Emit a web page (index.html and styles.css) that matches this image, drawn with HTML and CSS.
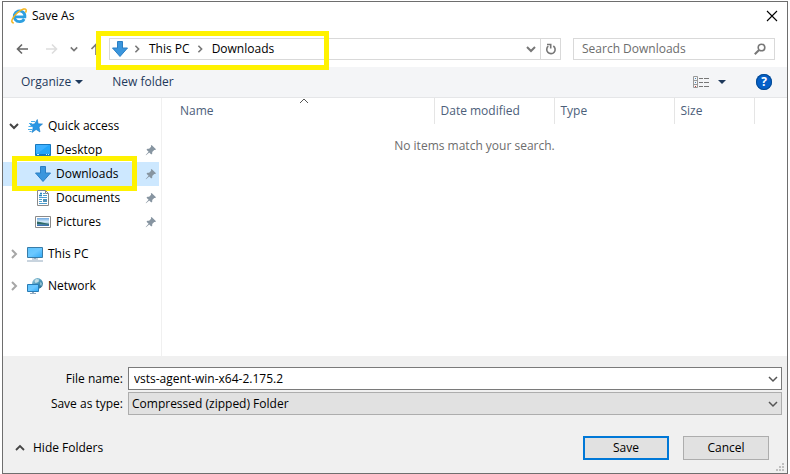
FILE: index.html
```
<!DOCTYPE html>
<html lang="en">
<head>
<meta charset="utf-8">
<title>Save As</title>
<meta name="viewport" content="width=device-width, initial-scale=1">
<link rel="stylesheet" href="styles.css">
</head>
<body>
<svg class="defs" aria-hidden="true">
  <defs>
    <linearGradient id="screen" x1="0" y1="0" x2="1" y2="1"><stop offset="0" stop-color="#5cc4ff"/><stop offset="0.5" stop-color="#6cc8ff"/><stop offset="1" stop-color="#2ea9f7"/></linearGradient>
    <linearGradient id="globe" x1="0" y1="0" x2="1" y2="1"><stop offset="0" stop-color="#9cc8da"/><stop offset="0.5" stop-color="#4f9abb"/><stop offset="1" stop-color="#1d5f80"/></linearGradient>
    <linearGradient id="photo" x1="0" y1="0" x2="0" y2="1"><stop offset="0" stop-color="#6fa9e2"/><stop offset="0.5" stop-color="#dceefa"/><stop offset="0.7" stop-color="#7fa9c4"/><stop offset="1" stop-color="#2b62ad"/></linearGradient>
    <symbol id="arrow" viewBox="0 0 16 16"><path d="M5.500.5h5V7h5L8 15.500.5 7h5z" fill="#3a96dd" stroke="#2b7fc4"/></symbol>
    <symbol id="pin" viewBox="0 0 12 12"><path d="M6.600 1 11 5.300 10.200 6.100 9.200 5.900 7.200 7.900 7.300 9.600 6.300 10.500 4.200 8.400 1 11.300.7 11 3.600 7.800 1.500 5.700 2.400 4.700 4.100 4.800 6.100 2.800 5.800 1.800z" fill="#8795a1"/></symbol>
    <symbol id="down" viewBox="0 0 10 10"><path d="M1 3l4 4 4-4" fill="none" stroke="currentColor"/></symbol>
    <symbol id="right" viewBox="0 0 10 10"><path d="M3 1l4 4-4 4" fill="none" stroke="currentColor"/></symbol>
  </defs>
</svg>
<main class="dialog">
  <header class="titlebar">
    <svg class="ie" viewBox="0 0 16 16" aria-hidden="true"><path d="M13.200 11A5.400 5.400 0 1 1 13.900 8.800H4.500" fill="none" stroke="#2d9fe0" stroke-width="2.800"/><path d="M4.500 6.500A4.400 4.400 0 0 1 8.500 3.700" fill="none" stroke="#7cc8f2"/><path d="M2.800 15C-1.500 14.500 2 8.500 7 4.300 11 1 15.300-.5 15.200 2.500c0 .8-.3 1.500-.7 2.200" fill="none" stroke="#f5b41b" stroke-width="1.500"/></svg>
    <h1>Save As</h1>
    <button class="close" aria-label="Close"><svg viewBox="0 0 12 12"><path d="M1 1l10 10M11 1L1 11" fill="none" stroke="#000" stroke-width="1.100"/></svg></button>
  </header>

  <nav class="navbar" aria-label="Location">
    <div class="history">
      <button aria-label="Back"><svg class="i12" viewBox="0 0 12 12"><path d="M12 6H1.500M6 1.500L1.500 6 6 10.500" fill="none" stroke="#666" stroke-width="1.600"/></svg></button>
      <button aria-label="Forward" disabled><svg class="i12" viewBox="0 0 12 12"><path d="M0 6h10.500M6 1.500L10.500 6 6 10.500" fill="none" stroke="#ddd" stroke-width="1.600"/></svg></button>
      <button class="recent" aria-label="Recent locations"><svg class="i8"><use href="#down"/></svg></button>
      <button aria-label="Up"><svg class="i12" viewBox="0 0 12 12"><path d="M6 12V1.500M1.500 6L6 1.500 10.500 6" fill="none" stroke="#777" stroke-width="1.600"/></svg></button>
    </div>
    <div class="address">
      <svg class="i16 place"><use href="#arrow"/></svg>
      <svg class="i8 sep"><use href="#right"/></svg>
      <a href="#">This PC</a>
      <svg class="i8 sep"><use href="#right"/></svg>
      <a href="#">Downloads</a>
      <button class="previous" aria-label="Previous locations"><svg class="i10"><use href="#down"/></svg></button>
      <button class="refresh" aria-label="Refresh"><svg class="i12" viewBox="0 0 12 12"><path d="M8.300 3A4.200 4.200 0 1 1 3.300 3.200" fill="none" stroke="#777" stroke-width="1.600"/><path d="M2 1.500h3.700v4" fill="none" stroke="#777" stroke-width="1.600"/></svg></button>
      <span class="mark mark-address"></span>
    </div>
    <div class="search">
      <input type="search" placeholder="Search Downloads" aria-label="Search Downloads">
      <svg class="i12" viewBox="0 0 12 12" aria-hidden="true"><circle cx="7.500" cy="4.500" r="3.300" fill="none" stroke="#777" stroke-width="1.600"/><path d="M5 7L.8 11.200" stroke="#777" stroke-width="2"/></svg>
    </div>
  </nav>

  <div class="toolbar">
    <button>Organize <svg class="caret" viewBox="0 0 8 4"><path d="M0 0h8L4 4z"/></svg></button>
    <button class="new">New folder</button>
    <button class="view" aria-label="Change your view"><svg class="list" viewBox="0 0 16 12"><path d="M.5.5h4v11h-4zM.5 4.500h4M.5 8.500h4" fill="none" stroke="#999"/><path d="M6 2.500h4m1 0h5M6 6.500h4m1 0h5M6 10.500h4m1 0h5" stroke="#777"/><path d="M2 2.500h1M2 6.500h1" stroke="#4a86b8"/><path d="M2 10.500h1" stroke="#c0392b"/></svg><svg class="caret" viewBox="0 0 8 4"><path d="M0 0h8L4 4z"/></svg></button>
    <button class="help" aria-label="Help">?</button>
  </div>

  <div class="body">
    <nav class="tree" aria-label="Folders">
      <ul>
        <li><a class="root open" href="#"><svg class="twist"><use href="#down"/></svg><svg class="i16" viewBox="0 0 16 16"><path d="M10.300 1.500l.8 4.300 4.400.2-3.500 3 1 5-3.900-2.500L5 14.500l1.200-5L3 6.500l4.500-.6z" fill="#2997e5" stroke="#187bc6" stroke-width=".6"/><path d="M4 3.500h4M2 5.500h3M1.500 8.500h4M1 11.500h4M2.500 13.500h2" stroke="#4aaeea"/></svg>Quick access</a>
          <ul>
            <li><a class="leaf" href="#"><svg class="i16" viewBox="0 0 16 16"><path d="M.5 2.500h15v11H.5z" fill="#23a5fa" stroke="#1677bd"/><path d="M1 3h13L3 11H1z" fill="#3db0ff"/><path d="M1 12.500h14" stroke="#1677bd"/><path d="M2 12.500h2m7 0h1m1 0h1" stroke="#c7eaff"/></svg>Desktop<svg class="pin"><use href="#pin"/></svg></a></li>
            <li><a class="leaf selected" href="#" aria-current="true"><svg class="i16"><use href="#arrow"/></svg>Downloads<svg class="pin"><use href="#pin"/></svg><span class="mark mark-folder"></span></a></li>
            <li><a class="leaf" href="#"><svg class="i16" viewBox="0 0 16 16"><path d="M2.500.5h8l3 3v12h-11z" fill="#fff" stroke="#8a8a8a"/><path d="M10.500.5v3h3" fill="none" stroke="#8a8a8a"/><path d="M8 3.500h2M8 5.500h4M4 7.500h8M4 9.500h3M4 11.500h3M4 13.500h8" stroke="#4f9fcf"/><path d="M4 5.500h3M5 3.500h2" stroke="#2684bd" stroke-width="1.500"/><path d="M8 9h4v3H8z" fill="#4f91b7"/></svg>Documents<svg class="pin"><use href="#pin"/></svg></a></li>
            <li><a class="leaf" href="#"><svg class="i16" viewBox="0 0 16 16"><path d="M.5 2.500h15v11H.5z" fill="#fff" stroke="#8a8a8a"/><path d="M2 4h12v8H2z" fill="url(#photo)"/><path d="M2 7.500l3 .5 9 2v.8L2 10z" fill="#2e6a66"/></svg>Pictures<svg class="pin"><use href="#pin"/></svg></a></li>
          </ul>
        </li>
        <li><a class="root" href="#"><svg class="twist"><use href="#right"/></svg><svg class="i16" viewBox="0 0 16 16"><path d="M.5 1.500h15v10H.5z" fill="url(#screen)" stroke="#397ca8"/><path d="M5 13h6M0 15h16" stroke="#92a9be"/><path d="M7 12h2v1H7z" fill="#92a9be"/></svg>This PC</a></li>
        <li><a class="root" href="#"><svg class="twist"><use href="#right"/></svg><svg class="i16" viewBox="0 0 16 16"><circle cx="10.500" cy="5.500" r="5.400" fill="url(#globe)"/><path d="M9 1l3 .5-.5 2.500-3 1-1-2z" fill="#c5e0e8"/><path d="M13 4l2 1-.5 3-1.500-1z" fill="#8dc0d2"/><path d="M.5 6.500h11v7H.5z" fill="url(#screen)" stroke="#287bb4"/><path d="M3 15.500h6M5 14.500h2" stroke="#92a9be"/></svg>Network</a></li>
      </ul>
    </nav>
    <section class="files">
      <table>
        <colgroup><col class="c-name"><col class="c-mid"><col class="c-mid"><col class="c-size"><col></colgroup>
        <thead><tr><th>Name<svg class="sort" viewBox="0 0 10 6"><path d="M1 5l4-4 4 4" fill="none" stroke="#555"/></svg></th><th>Date modified</th><th>Type</th><th>Size</th><td></td></tr></thead>
        <tbody><tr><td colspan="5">No items match your search.</td></tr></tbody>
      </table>
    </section>
  </div>

  <footer class="footer">
    <div class="fields">
      <label for="filename">File name:</label>
      <div class="combo"><input id="filename" type="text" value="vsts-agent-win-x64-2.175.2"><svg class="i10"><use href="#down"/></svg></div>
      <label for="filetype">Save as type:</label>
      <div class="combo"><select id="filetype"><option>Compressed (zipped) Folder</option></select><svg class="i10"><use href="#down"/></svg></div>
    </div>
    <div class="actions">
      <button class="hide"><svg class="i10" viewBox="0 0 10 10"><path d="M1 7l4-4 4 4" fill="none" stroke="#444" stroke-width="1.800"/></svg>Hide Folders</button>
      <button class="push default">Save</button>
      <button class="push">Cancel</button>
    </div>
    <svg class="grip" viewBox="0 0 8 8" aria-hidden="true"><path d="M6 0h2v2H6zM3 3h2v2H3zM6 3h2v2H6zM0 6h2v2H0zM3 6h2v2H3zM6 6h2v2H6z" fill="#bfbfbf"/></svg>
  </footer>
</main>
</body>
</html>
```
FILE: styles.css
```
* { box-sizing: border-box; }

body {
  margin: 0;
  background: #fff;
  color: #000;
  font: 12px/16px "Open Sans", "Segoe UI", sans-serif;
}

button, input, select { font: inherit; color: inherit; margin: 0; }
button { padding: 0; border: 0; background: none; display: flex; align-items: center; }
a { color: inherit; text-decoration: none; }
ul { list-style: none; margin: 0; padding: 0; }
svg { display: block; flex: none; }

.defs { position: absolute; width: 0; height: 0; }
.i8 { width: 8px; height: 8px; }
.i10 { width: 10px; height: 10px; }
.i12 { width: 12px; height: 12px; }
.i16 { width: 16px; height: 16px; }

.dialog {
  min-height: calc(100vh - 1px);
  margin: 1px 2px 0;
  border: 1px solid #6e6e6e;
  display: flex;
  flex-direction: column;
}

/* Title bar */
.titlebar { display: flex; align-items: center; height: 28px; padding: 0 9px 0 8px; gap: 5px; }
.titlebar h1 { flex: 1; margin: 0; font-size: 12px; font-weight: 400; }
.ie { width: 16px; height: 16px; }
.close svg { width: 12px; height: 12px; }

/* Navigation bar */
.navbar { display: flex; align-items: center; height: 37px; padding: 0 12px 0 13px; }
.history { display: flex; align-items: center; width: 93px; gap: 18px; }
.history .recent { margin: 0 -6px; color: #777; stroke-width: 2; }
.address {
  position: relative;
  flex: 1;
  display: flex;
  align-items: center;
  height: 22px;
  border: 1px solid #d9d9d9;
  background: #fff;
}
.place { margin: 0 5px 0 2px; }
.sep { color: #777; margin-right: 8px; stroke-width: 2; }
.address a { margin-right: 6px; }
.previous { margin-left: auto; padding: 0 4px; color: #777; stroke-width: 2; }
.refresh { align-self: stretch; width: 20px; justify-content: center; border-left: 1px solid #d9d9d9; }
.search {
  display: flex;
  align-items: center;
  width: 202px;
  height: 22px;
  margin-left: 12px;
  padding: 0 8px;
  border: 1px solid #d9d9d9;
}
.search input { flex: 1; min-width: 0; padding: 0; border: 0; outline: 0; background: none; }
.search input::placeholder { color: #6d6d6d; opacity: 1; }

/* Highlight frames drawn over the dialog */
.mark { position: absolute; border: 5px solid #fff200; pointer-events: none; }
.mark-address { left: -14px; top: -8px; width: 233px; height: 39px; }
.mark-folder { left: 9px; top: -6px; width: 125px; height: 35px; }

/* Command bar */
.toolbar {
  display: flex;
  align-items: center;
  height: 31px;
  padding: 0 15px 0 18px;
  background: #f4f5f7;
  border-bottom: 1px solid #e5e6e8;
  color: #1e395b;
}
.toolbar button { gap: 4px; }
.toolbar .new { margin-left: 29px; }
.caret { width: 8px; height: 4px; fill: #1e395b; }
.toolbar .view { margin-left: auto; gap: 9px; }
.list { width: 16px; height: 12px; }
.toolbar .help {
  width: 16px;
  height: 16px;
  margin-left: 30px;
  justify-content: center;
  border-radius: 50%;
  background: #0560c8;
  box-shadow: inset 0 0 0 1px #064a91;
  color: #fff;
  font-weight: 700;
}

/* Folder tree */
.body { flex: 1; display: flex; min-height: 257px; }
.tree { width: 159px; padding: 16px 2px 0 0; border-right: 1px solid #f0f0f0; }
.tree a { position: relative; display: flex; align-items: center; height: 24px; }
.tree > ul { display: flex; flex-direction: column; gap: 8px; }
.root { padding-left: 6px; }
.root .i16 { margin-right: 5px; }
.twist { width: 10px; height: 10px; margin-right: 8px; color: #a6a6a6; stroke-width: 2; }
.open .twist { color: #444; }
.leaf { padding: 0 2px 0 32px; gap: 5px; }
.leaf.selected { background: #cde8ff; }
.pin { width: 12px; height: 12px; margin-left: auto; }

/* File list */
.files { flex: 1; }
table { width: 100%; border-collapse: collapse; table-layout: fixed; }
.c-name { width: 272px; }
.c-mid { width: 120px; }
.c-size { width: 80px; }
th {
  position: relative;
  height: 26px;
  padding: 0 6px;
  border-right: 1px solid #e5e5e5;
  color: #4c607a;
  font-weight: 400;
  text-align: left;
}
th:first-child { padding-left: 18px; }
.sort { position: absolute; left: 137px; top: 0; width: 10px; height: 6px; }
tbody td { padding: 14px 0; color: #6d6d6d; text-align: center; }

/* Footer */
.footer { position: relative; padding: 11px 5px 13px; background: #f0f0f0; }
.fields { display: grid; grid-template-columns: 115px 1fr; column-gap: 5px; row-gap: 2px; align-items: center; }
.fields label { text-align: right; }
.combo { position: relative; }
.combo input, .combo select {
  display: block;
  width: 100%;
  height: 23px;
  padding: 0 24px 0 5px;
  border: 1px solid #7a7a7a;
  border-radius: 0;
  outline: 0;
  background: #fff;
  appearance: none;
}
.combo select { padding-left: 3px; border-color: #adadad; background: #e1e1e1; }
.combo svg { position: absolute; right: 4px; top: 7px; color: #555; stroke-width: 1.5; pointer-events: none; }
.actions { display: flex; align-items: center; gap: 14px; margin: 21px 13px 0 7px; }
.hide { gap: 8px; margin-right: auto; }
.push { justify-content: center; width: 86px; height: 24px; border: 1px solid #adadad; background: #e1e1e1; }
.push.default { border: 2px solid #0078d7; }
.grip { position: absolute; right: 3px; bottom: 2px; width: 8px; height: 8px; }
```
